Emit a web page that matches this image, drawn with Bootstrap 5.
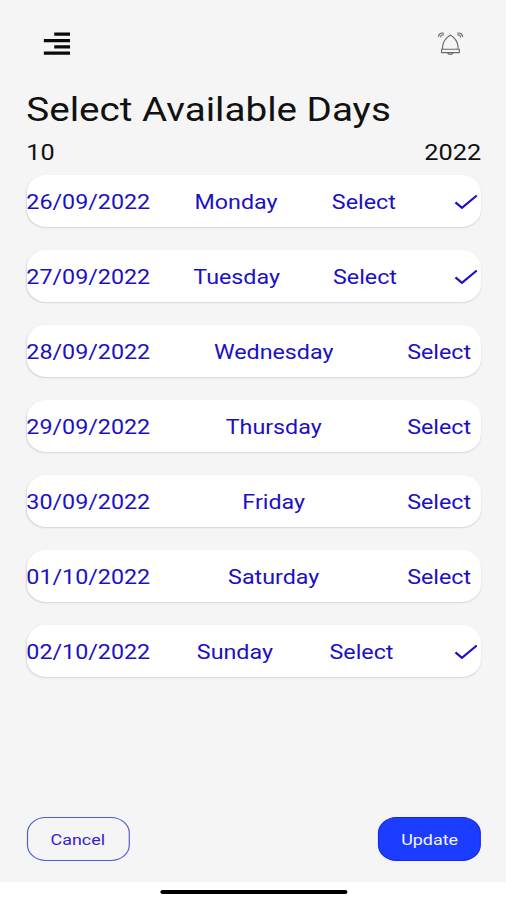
<!DOCTYPE html>
<html lang="en">
<head>
<meta charset="utf-8">
<meta name="viewport" content="width=device-width, initial-scale=1">
<title>Select Available Days</title>
<link href="https://cdn.jsdelivr.net/npm/bootstrap@5.3.0/dist/css/bootstrap.min.css" rel="stylesheet">
<style>
  :root { --stretch: 1.17; --ink: #1b10c4; }
  body { font-family: Roboto, "Liberation Sans", sans-serif; background: #fff; color: #111; overflow: hidden; }
  .screen { width: 433px; height: 900px; transform: scaleX(var(--stretch)); transform-origin: 0 0; }
  .surface { height: 882px; background: #f5f5f5; padding: 28px 21.8px 21px 22.5px; }
  .topbar { height: 32px; padding: 0 14.6px 0 14.8px; }
  .title { font-size: 33px; line-height: 40px; margin: 30px 0 0; font-weight: 400; white-space: nowrap; }
  .period { font-size: 21.6px; line-height: 24px; margin-top: 11px; }
  .days { margin-top: 10px; gap: 23px; }
  .day { height: 52px; background: #fff; border-radius: 17px; box-shadow: 0 1px 1.5px rgba(0,0,0,.13); color: var(--ink); font-size: 19.9px; line-height: 24px; padding-top: 3px; }
  .pick { color: inherit; padding: 0 8.5px; }
  .tick { width: 26.5px; height: 30px; margin-top: -2px; }
  .action { width: 88px; height: 44px; border-radius: 16px; font-size: 15.3px; padding: 2px 0 0; }
  .action-cancel { border: 1px solid #4b5fdc; color: #3a20cc; }
  .action-update { background: #1c3cff; border: 1px solid #1428e8; color: #f2f3ff; }
  .homebar { width: 160px; height: 4px; border-radius: 2px; background: #000; margin-top: 7.5px; }
</style>
<script src="https://cdn.jsdelivr.net/npm/bootstrap@5.3.0/dist/js/bootstrap.bundle.min.js"></script>
</head>
<body>
<svg class="d-none"><defs>
  <symbol id="check" viewBox="0 0 31 30" preserveAspectRatio="none"><path d="M5 15.3 11.5 20.8 26.3 8.5" fill="none" stroke="#1b10c4" stroke-width="2.2"/></symbol>
</defs></svg>
<div class="screen">
  <main class="surface d-flex flex-column">
    <header class="topbar d-flex justify-content-between align-items-center">
      <svg width="23" height="24" viewBox="0 0 27 24" preserveAspectRatio="none" aria-label="Menu"><path d="M11 2.2H27M0.5 8.7H27M11 14.8H27M0.5 21.2H27" stroke="#0a0a0a" stroke-width="3.2"/></svg>
      <svg width="22.2" height="24" viewBox="0 0 26 24" preserveAspectRatio="none" fill="none" stroke="#6a6a6a" stroke-width="1.1" aria-label="Notifications">
        <path d="M5 17.3V14.5C5.4 9.5 9 5.5 12.8 3C16.8 5.5 20.1 9.5 20.5 14.5V17.3M4 17.3H21.8V20.6H4ZM9.8 20.6C10.5 23 15 23 15.7 20.6"/>
        <path d="M1.2 5.2C.6 2 3.4.3 6.4 1.3M3.2 5.5C2.8 3.5 4.2 2.5 6.2 3M24.8 5.2C25.4 2 22.6.3 19.6 1.3M22.8 5.5C23.2 3.5 21.8 2.5 19.8 3"/>
      </svg>
    </header>
    <h1 class="title">Select Available Days</h1>
    <div class="period d-flex justify-content-between"><span>10</span><span>2022</span></div>
    <section class="days d-flex flex-column">
      <div class="day d-flex justify-content-between align-items-center"><span>26/09/2022</span><span>Monday</span><span class="pick">Select</span><svg class="tick"><use href="#check"/></svg></div>
      <div class="day d-flex justify-content-between align-items-center"><span>27/09/2022</span><span>Tuesday</span><span class="pick">Select</span><svg class="tick"><use href="#check"/></svg></div>
      <div class="day d-flex justify-content-between align-items-center"><span>28/09/2022</span><span>Wednesday</span><span class="pick">Select</span></div>
      <div class="day d-flex justify-content-between align-items-center"><span>29/09/2022</span><span>Thursday</span><span class="pick">Select</span></div>
      <div class="day d-flex justify-content-between align-items-center"><span>30/09/2022</span><span>Friday</span><span class="pick">Select</span></div>
      <div class="day d-flex justify-content-between align-items-center"><span>01/10/2022</span><span>Saturday</span><span class="pick">Select</span></div>
      <div class="day d-flex justify-content-between align-items-center"><span>02/10/2022</span><span>Sunday</span><span class="pick">Select</span><svg class="tick"><use href="#check"/></svg></div>
    </section>
    <footer class="d-flex justify-content-between mt-auto">
      <button type="button" class="btn action action-cancel">Cancel</button>
      <button type="button" class="btn action action-update">Update</button>
    </footer>
  </main>
  <div class="homebar mx-auto"></div>
</div>
</body>
</html>
